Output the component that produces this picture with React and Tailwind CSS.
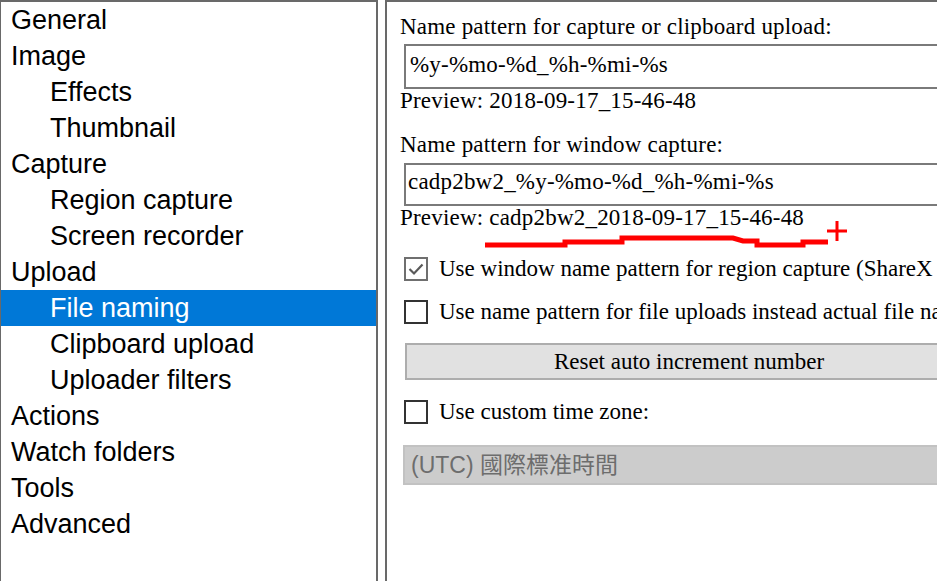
/* eslint-disable */
import React from 'react';

const items = [
  { label: 'General', child: false },
  { label: 'Image', child: false },
  { label: 'Effects', child: true },
  { label: 'Thumbnail', child: true },
  { label: 'Capture', child: false },
  { label: 'Region capture', child: true },
  { label: 'Screen recorder', child: true },
  { label: 'Upload', child: false },
  { label: 'File naming', child: true, selected: true },
  { label: 'Clipboard upload', child: true },
  { label: 'Uploader filters', child: true },
  { label: 'Actions', child: false },
  { label: 'Watch folders', child: false },
  { label: 'Tools', child: false },
  { label: 'Advanced', child: false },
];

const CheckBox = ({ checked }) => (
  <div className={`w-[24px] h-[24px] flex-shrink-0 border-2 bg-white flex items-center justify-center ${checked ? 'border-[#6f6f6f]' : 'border-[#333333]'}`}>
    {checked && (
      <svg width="18" height="18" viewBox="0 0 18 18">
        <polyline points="2.5,9 7,13.5 15.5,4.5" fill="none" stroke="#5a5a5a" strokeWidth="2.2" />
      </svg>
    )}
  </div>
);

const CheckRow = ({ checked, label, className = '' }) => (
  <div className={`flex items-center h-6 ml-[4px] gap-[11px] whitespace-nowrap tracking-normal ${className}`}>
    <CheckBox checked={checked} />
    <span>{label}</span>
  </div>
);

export default function App() {
  return (
    <div className="relative w-[937px] h-[581px] overflow-hidden bg-white flex">
      {/* tree */}
      <div className="w-[378px] h-full flex-shrink-0 border-l border-t-2 border-r-2 border-[#696969] font-['Liberation_Sans',Arial,sans-serif] text-[27px] leading-[36px] text-black">
        {items.map((it, i) => (
          <div key={i} className={`h-9 whitespace-nowrap ${it.child ? 'pl-[49px]' : 'pl-[10px]'} ${it.selected ? 'bg-[#0078d7] text-white' : ''}`}>
            {it.label}
          </div>
        ))}
      </div>

      {/* settings */}
      <div className="ml-[7px] flex-1 h-full overflow-hidden border-l-2 border-t-2 border-[#696969] pl-[13px] pt-[13px] font-['Liberation_Serif','Times_New_Roman',serif] text-[23px] leading-[24px] tracking-[0.2px] text-black">
        <div className="h-6 whitespace-nowrap">Name pattern for capture or clipboard upload:</div>
        <div className="mt-[5px] ml-[4px] w-[570px] h-[45px] border-2 border-[#7a7a7a] pl-[4px] pb-[4px] flex items-center whitespace-nowrap">
          %y-%mo-%d_%h-%mi-%s
        </div>
        <div className="h-6 whitespace-nowrap">Preview: 2018-09-17_15-46-48</div>

        <div className="mt-[20px] h-6 whitespace-nowrap">Name pattern for window capture:</div>
        <div className="mt-[6px] ml-[4px] w-[570px] h-[43px] border-2 border-[#7a7a7a] pl-[2px] pb-[5px] flex items-center whitespace-nowrap">
          cadp2bw2_%y-%mo-%d_%h-%mi-%s
        </div>
        <div className="h-6 whitespace-nowrap">Preview: cadp2bw2_2018-09-17_15-46-48</div>

        <CheckRow checked className="mt-[27px]" label="Use window name pattern for region capture (ShareX only)" />
        <CheckRow className="mt-[19px]" label="Use name pattern for file uploads instead actual file name" />

        <div className="mt-[19px] ml-[5px] w-[568px] h-[37px] border-2 border-[#adadad] bg-[#e1e1e1] flex items-center justify-center whitespace-nowrap tracking-normal">
          Reset auto increment number
        </div>

        <CheckRow className="mt-[20px]" label="Use custom time zone:" />

        <div className="mt-[21px] ml-[3px] w-[570px] h-[40px] border-2 border-[#c2c2c2] bg-[#cccccc] pl-[6px] flex items-center whitespace-nowrap text-[#6d6d6d] font-['Liberation_Sans','Noto_Sans_CJK_TC',sans-serif] text-[23px] tracking-normal">
          (UTC) 國際標准時間
        </div>
      </div>

      {/* hand-drawn annotation */}
      <svg className="absolute left-0 top-0 pointer-events-none" width="937" height="581" viewBox="0 0 937 581">
        <path d="M485 245 H565 V242 H622 V238 H733 L743 241 H757 V245 H803 V242 H828" fill="none" stroke="#ff0000" strokeWidth="5" />
        <path d="M827 231 H847 M837 221 V241" fill="none" stroke="#ff0000" strokeWidth="3" />
      </svg>
    </div>
  );
}
